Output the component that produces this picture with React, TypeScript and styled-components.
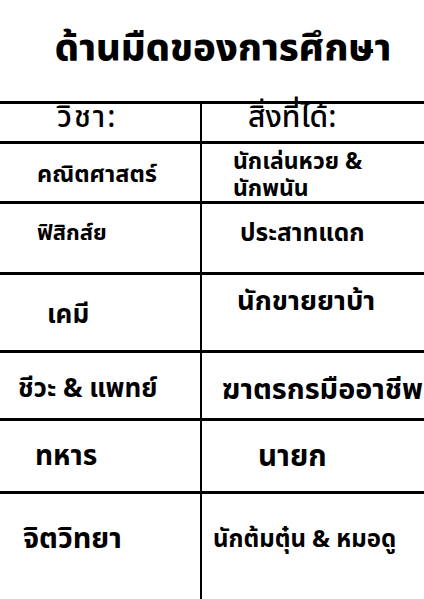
import React from "react";
import styled, { createGlobalStyle } from "styled-components";

const Global = createGlobalStyle`
  html, body { margin: 0; padding: 0; background: #fff; }
  body { font-family: "Noto Sans Thai", "Noto Sans", "DejaVu Sans", sans-serif; color: #000; }
`;

const Page = styled.div`
  width: 424px;
  height: 599px;
  overflow: hidden;
  background: #fff;
  display: flex;
  flex-direction: column;
`;

const Title = styled.h1`
  margin: 0;
  height: 101px;
  box-sizing: border-box;
  padding-top: 21px;
  padding-left: 22px;
  text-align: center;
  font-size: 38px;
  font-weight: 800;
  line-height: 56px;
`;

const Table = styled.div`
  border-top: 3px solid #000;
  display: flex;
  flex-direction: column;
  flex: 1;
`;

const Row = styled.div<{ $h?: number; $last?: boolean }>`
  display: grid;
  grid-template-columns: 200px 1fr;
  height: ${(p) => (p.$h ? `${p.$h}px` : "auto")};
  flex: ${(p) => (p.$last ? 1 : "none")};
  border-bottom: ${(p) => (p.$last ? "none" : "3px solid #000")};
  box-sizing: border-box;
`;

const Cell = styled.div<{ $x: number; $y: number; $size: number; $weight?: number; $track?: number; $right?: boolean }>`
  padding-left: ${(p) => p.$x}px;
  font-size: ${(p) => p.$size}px;
  font-weight: ${(p) => p.$weight ?? 700};
  letter-spacing: ${(p) => p.$track ?? 0}px;
  line-height: 1.1;
  white-space: nowrap;
  border-left: ${(p) => (p.$right ? "2px solid #000" : "none")};
  overflow: visible;
  & > div:first-child {
    margin-top: ${(p) => p.$y}px;
  }
`;

const Line = styled.div<{ $gap?: number }>`
  line-height: ${(p) => (p.$gap ? `${p.$gap}px` : "inherit")};
`;

type Side = { x: number; y: number; s: number; w?: number; track?: number };
type R = {
  h?: number;
  left: Side & { t: string };
  right: Side & { t: string[]; gap?: number };
};

const rows: R[] = [
  { h: 40, left: { t: "วิชา:", x: 57, y: -2, s: 30, w: 500, track: 2 }, right: { t: ["สิ่งที่ได้:"], x: 46, y: -2, s: 30, w: 500 } },
  { h: 60, left: { t: "คณิตศาสตร์", x: 37, y: 19, s: 23.5 }, right: { t: ["นักเล่นหวย &", "นักพนัน"], x: 31, y: 5, s: 23, gap: 27 } },
  { h: 71, left: { t: "ฟิสิกส์ย", x: 37, y: 18, s: 22 }, right: { t: ["ประสาทแดก"], x: 38, y: 17, s: 24.5 } },
  { h: 78, left: { t: "เคมี", x: 47, y: 26, s: 26 }, right: { t: ["นักขายยาบ้า"], x: 35, y: 12, s: 27.4 } },
  { h: 68, left: { t: "ชีวะ & แพทย์", x: 18, y: 22, s: 26 }, right: { t: ["ฆาตรกรมืออาชีพ"], x: 20, y: 22, s: 28.8 } },
  { h: 73, left: { t: "ทหาร", x: 35, y: 21, s: 28 }, right: { t: ["นายก"], x: 56, y: 20, s: 29.5 } },
  { left: { t: "จิตวิทยา", x: 23, y: 30, s: 28.8 }, right: { t: ["นักต้มตุ๋น & หมอดู"], x: 11, y: 33, s: 24 } },
];

export default function App() {
  return (
    <Page>
      <Global />
      <Title>ด้านมืดของการศึกษา</Title>
      <Table>
        {rows.map((r, i) => (
          <Row key={i} $h={r.h} $last={i === rows.length - 1}>
            <Cell $x={r.left.x} $y={r.left.y} $size={r.left.s} $weight={r.left.w} $track={r.left.track}>
              <Line>{r.left.t}</Line>
            </Cell>
            <Cell $right $x={r.right.x} $y={r.right.y} $size={r.right.s} $weight={r.right.w} $track={r.right.track}>
              {r.right.t.map((l, j) => (
                <Line key={j} $gap={r.right.gap}>
                  {l}
                </Line>
              ))}
            </Cell>
          </Row>
        ))}
      </Table>
    </Page>
  );
}
